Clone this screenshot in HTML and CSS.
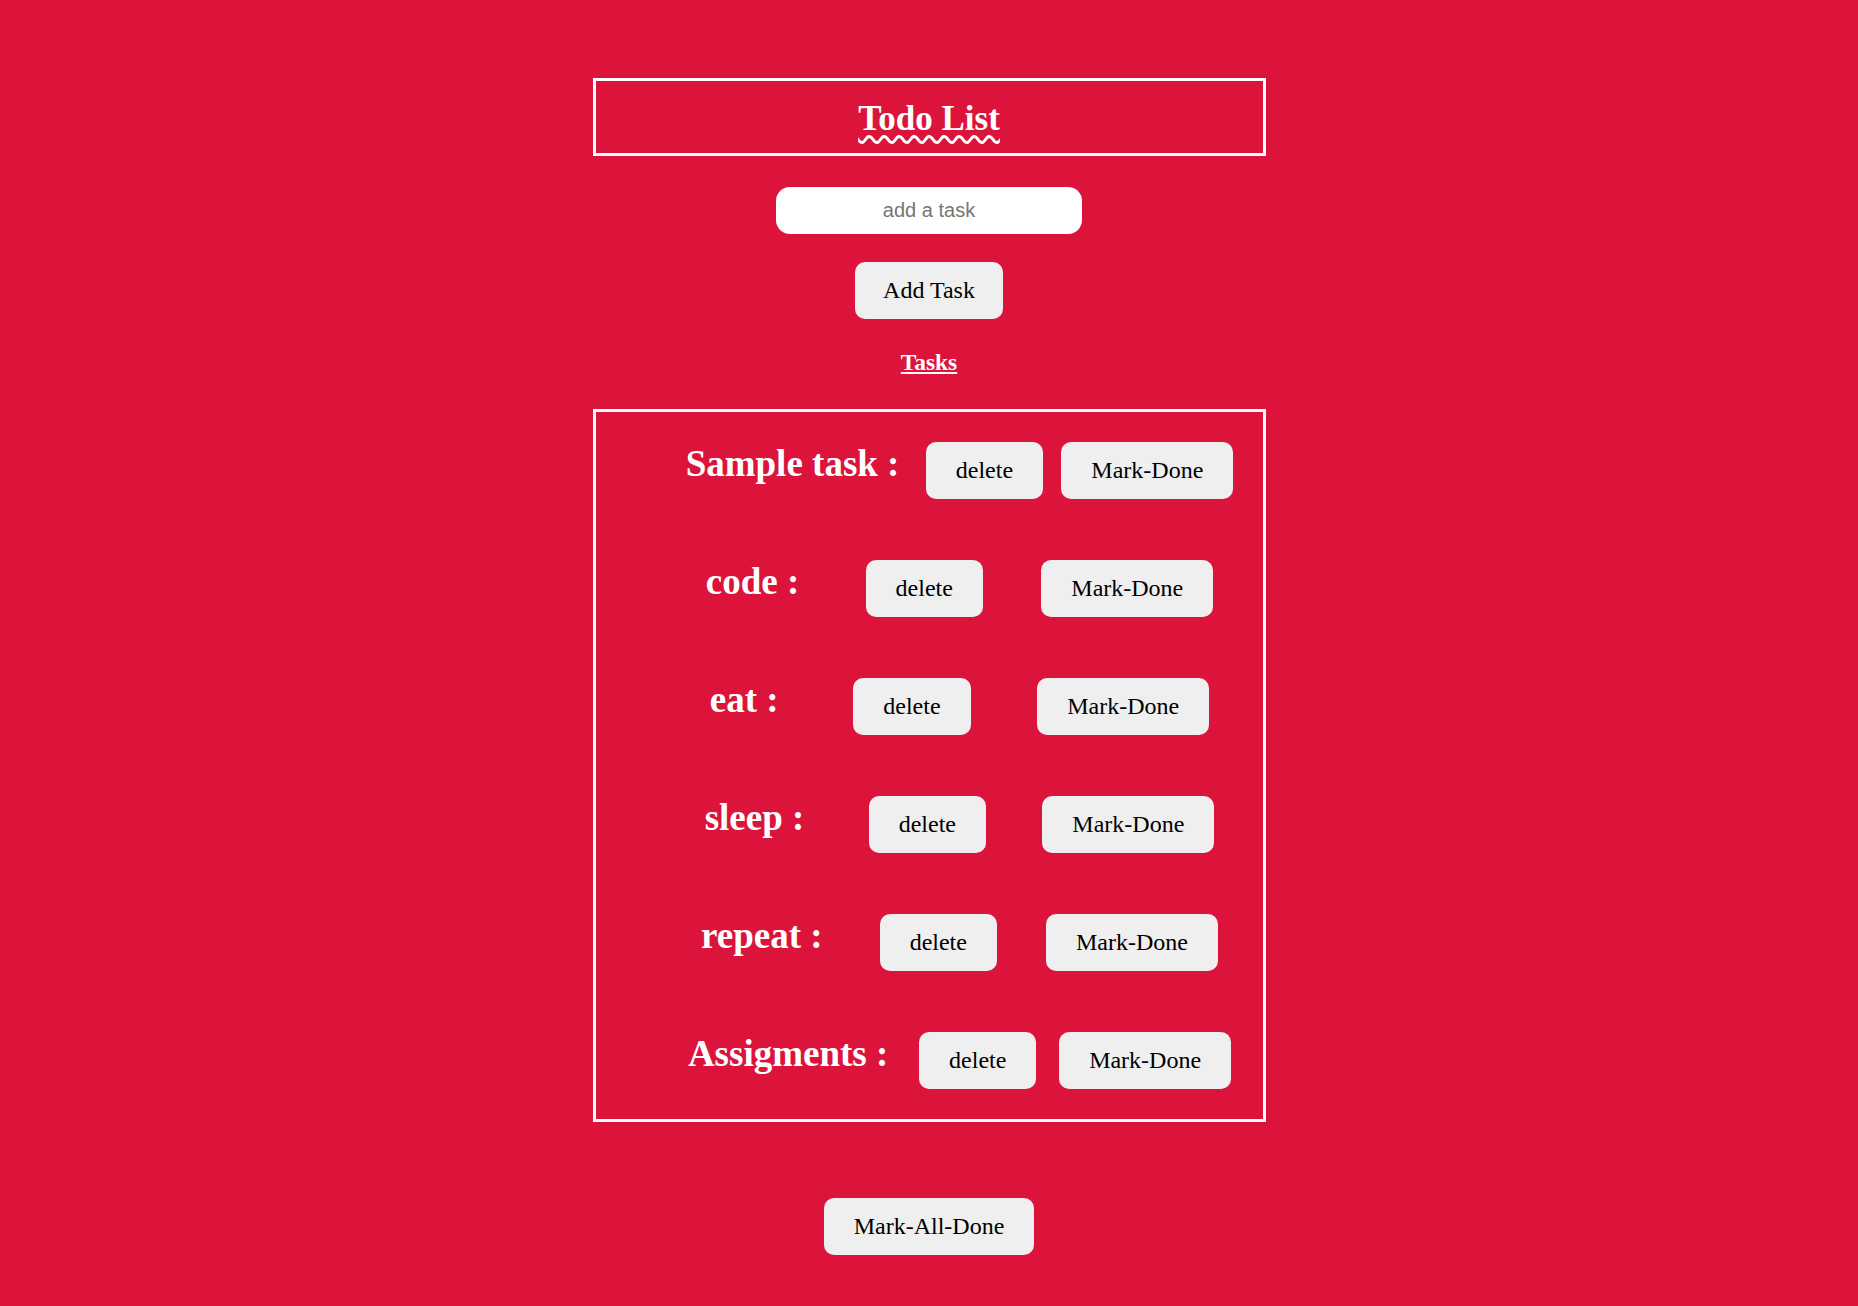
FILE: index.html
```html
<!DOCTYPE html>
<html lang="en">
<head>
<meta charset="utf-8">
<title>Todo List</title>
<link rel="stylesheet" href="styles.css">
</head>
<body>
<main class="app">
  <header class="header">
    <h1 class="title">Todo List</h1>
  </header>
  <input class="task-input" type="text" placeholder="add a task">
  <button class="btn btn-add">Add Task</button>
  <h3 class="tasks-heading">Tasks</h3>
  <section class="task-list">
    <div class="task-row"><h2 class="task-name">Sample task :</h2><button class="btn">delete</button><button class="btn">Mark-Done</button></div>
    <div class="task-row"><h2 class="task-name">code :</h2><button class="btn">delete</button><button class="btn">Mark-Done</button></div>
    <div class="task-row"><h2 class="task-name">eat :</h2><button class="btn">delete</button><button class="btn">Mark-Done</button></div>
    <div class="task-row"><h2 class="task-name">sleep :</h2><button class="btn">delete</button><button class="btn">Mark-Done</button></div>
    <div class="task-row"><h2 class="task-name">repeat :</h2><button class="btn">delete</button><button class="btn">Mark-Done</button></div>
    <div class="task-row"><h2 class="task-name">Assigments :</h2><button class="btn">delete</button><button class="btn">Mark-Done</button></div>
  </section>
  <button class="btn btn-all">Mark-All-Done</button>
</main>
</body>
</html>
```

FILE: styles.css
```css
html, body {
  margin: 0;
  padding: 0;
}

body {
  background: #dc143c;
  font-family: "Liberation Serif", "Times New Roman", serif;
  color: #ffffff;
}

.app {
  display: flex;
  flex-direction: column;
  align-items: center;
  padding-top: 78px;
  padding-bottom: 40px;
}

.header {
  width: 673px;
  box-sizing: border-box;
  border: 3px solid #ffffff;
  padding: 18px 0 14px;
  text-align: center;
}

.title {
  margin: 0;
  font-size: 35px;
  font-weight: bold;
  line-height: normal;
  text-decoration: underline wavy #ffffff;
  text-decoration-thickness: 3px;
  text-underline-offset: 5px;
}

.task-input {
  margin-top: 31px;
  width: 306px;
  height: 47px;
  box-sizing: border-box;
  border: none;
  border-radius: 14px;
  padding: 0 10px;
  background: #ffffff;
  font-family: "Liberation Sans", Arial, sans-serif;
  font-size: 20px;
  text-align: center;
  color: #000;
  outline: none;
}

.task-input::placeholder {
  color: #757575;
}

.btn {
  font-family: "Liberation Serif", "Times New Roman", serif;
  font-size: 24px;
  line-height: normal;
  color: #000000;
  background: #efefef;
  border: none;
  border-radius: 10px;
  padding: 15px 30px;
  margin: 0;
  cursor: pointer;
}

.btn-add {
  margin-top: 28px;
  padding: 15px 28.5px;
}

.tasks-heading {
  margin: 30px 0 0;
  font-size: 23.4px;
  font-weight: bold;
  line-height: normal;
  text-decoration: underline;
}

.task-list {
  margin-top: 33px;
  width: 673px;
  box-sizing: border-box;
  border: 3px solid #ffffff;
  padding: 30px 20px 30px 81px;
  display: flex;
  flex-direction: column;
  gap: 61px;
}

.task-row {
  display: flex;
  justify-content: space-around;
  align-items: flex-start;
}

.task-name {
  margin: 0 8px 0 0;
  font-size: 37px;
  font-weight: bold;
  line-height: normal;
  white-space: nowrap;
}

.btn-all {
  margin-top: 76px;
}
```
